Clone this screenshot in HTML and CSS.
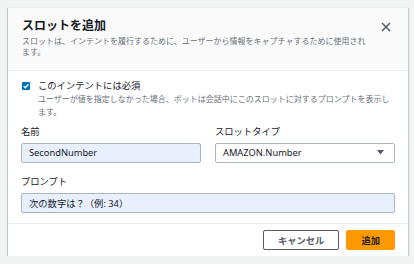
FILE: index.html
```html
<!DOCTYPE html>
<html lang="ja">
<head>
    <meta charset="UTF-8">
    <meta name="viewport" content="width=device-width, initial-scale=1.0">
    <title>スロットを追加</title>
    <link rel="stylesheet" href="styles.css">
</head>
<body>
    <div class="page">
        <div class="modal">
            <div class="modal-header">
                <div class="header-text">
                    <h2 class="modal-title">スロットを追加</h2>
                    <p class="modal-subtitle">スロットは、インテントを履行するために、ユーザーから情報をキャプチャするために使用されます。</p>
                </div>
                <button class="close-btn" aria-label="閉じる">
                    <svg width="10" height="10" viewBox="0 0 10 10">
                        <path d="M1 1 L9 9 M9 1 L1 9" stroke="#545b64" stroke-width="1.5" fill="none"/>
                    </svg>
                </button>
            </div>

            <div class="modal-body">
                <div class="check-row">
                    <span class="checkbox">
                        <svg width="8" height="8" viewBox="0 0 8 8">
                            <path d="M1.6 4.1 L3.3 5.8 L6.5 2.2" stroke="#fff" stroke-width="1.3" fill="none"/>
                        </svg>
                    </span>
                    <span class="check-label">このインテントには必須</span>
                </div>
                <p class="check-desc">ユーザーが値を指定しなかった場合、ボットは会話中にこのスロットに対するプロンプトを表示します。</p>

                <div class="field-grid">
                    <div class="form-group">
                        <label>名前</label>
                        <input type="text" class="text-input filled" value="SecondNumber">
                    </div>
                    <div class="form-group">
                        <label>スロットタイプ</label>
                        <div class="select-box">
                            <span>AMAZON.Number</span>
                            <svg width="7" height="5" viewBox="0 0 7 5">
                                <path d="M0 0 L7 0 L3.5 4.5 Z" fill="#545b64"/>
                            </svg>
                        </div>
                    </div>
                </div>

                <div class="form-group prompt-group">
                    <label>プロンプト</label>
                    <input type="text" class="text-input filled" value="次の数字は？（例: 34）">
                </div>
            </div>

            <div class="modal-footer">
                <button class="btn btn-cancel">キャンセル</button>
                <button class="btn btn-primary">追加</button>
            </div>
        </div>
    </div>
</body>
</html>
```

FILE: styles.css
```css
* {
    margin: 0;
    padding: 0;
    box-sizing: border-box;
}

body {
    font-family: "Noto Sans", "Noto Sans CJK JP", sans-serif;
    background: #f2f3f3;
    color: #16191f;
}

.page {
    padding: 7px 0 0 8px;
}

.modal {
    width: 400px;
    background: white;
    border-top: 1px solid #eaeded;
    box-shadow: 0 1px 1px 0 rgba(0,28,36,0.3), 1px 1px 1px 0 rgba(0,28,36,0.15), -1px 1px 1px 0 rgba(0,28,36,0.15);
}

.modal-header {
    display: flex;
    align-items: flex-start;
    padding: 10px 14px 13px 14px;
    background: #fafafa;
    border-bottom: 1px solid #eaeded;
}

.header-text {
    flex: 1;
}

.modal-title {
    font-size: 12px;
    line-height: 16px;
    font-weight: bold;
    color: #16191f;
}

.modal-subtitle {
    max-width: 346px;
    margin-top: 2px;
    font-size: 8px;
    line-height: 10.5px;
    color: #687078;
}

.close-btn {
    width: 16px;
    height: 16px;
    margin-top: 1px;
    border: none;
    background: none;
    display: flex;
    align-items: center;
    justify-content: center;
}

.modal-body {
    padding: 8px 13px 10px 13px;
}

.check-row {
    display: flex;
    align-items: center;
    gap: 8px;
}

.checkbox {
    width: 8px;
    height: 8px;
    margin-left: 1px;
    background: #0073bb;
    border-radius: 1px;
    display: flex;
}

.check-label {
    font-size: 9.3px;
    line-height: 13px;
}

.check-desc {
    padding-left: 17px;
    font-size: 8px;
    line-height: 13.3px;
    color: #687078;
}

.field-grid {
    display: grid;
    grid-template-columns: 1fr 1fr;
    gap: 14px;
    margin-top: 6px;
}

.form-group label {
    display: block;
    font-size: 9.3px;
    line-height: 13px;
    color: #16191f;
}

.text-input, .select-box {
    display: flex;
    align-items: center;
    width: 100%;
    height: 20px;
    margin-top: 5px;
    padding: 0 7px;
    border: 1px solid #aab7b8;
    border-radius: 2px;
    font-family: "Noto Sans", "Noto Sans CJK JP", sans-serif;
    font-size: 9.3px;
    color: #16191f;
    background: white;
    outline: none;
}

.text-input.filled {
    background: #e8f0fe;
}

.select-box {
    justify-content: space-between;
    padding-right: 10px;
}

.prompt-group {
    margin-top: 12px;
}

.modal-footer {
    display: flex;
    justify-content: flex-end;
    gap: 7px;
    padding: 6px 13px 6px 13px;
    border-top: 1px solid #eaeded;
}

.btn {
    height: 20px;
    padding: 0 14px;
    border-radius: 2px;
    font-family: "Noto Sans", "Noto Sans CJK JP", sans-serif;
    font-size: 9.3px;
    font-weight: bold;
    cursor: pointer;
}

.btn-cancel {
    background: white;
    border: 1px solid #545b64;
    color: #545b64;
}

.btn-primary {
    background: #ff9900;
    border: 1px solid #ff9900;
    color: #16191f;
}
```
